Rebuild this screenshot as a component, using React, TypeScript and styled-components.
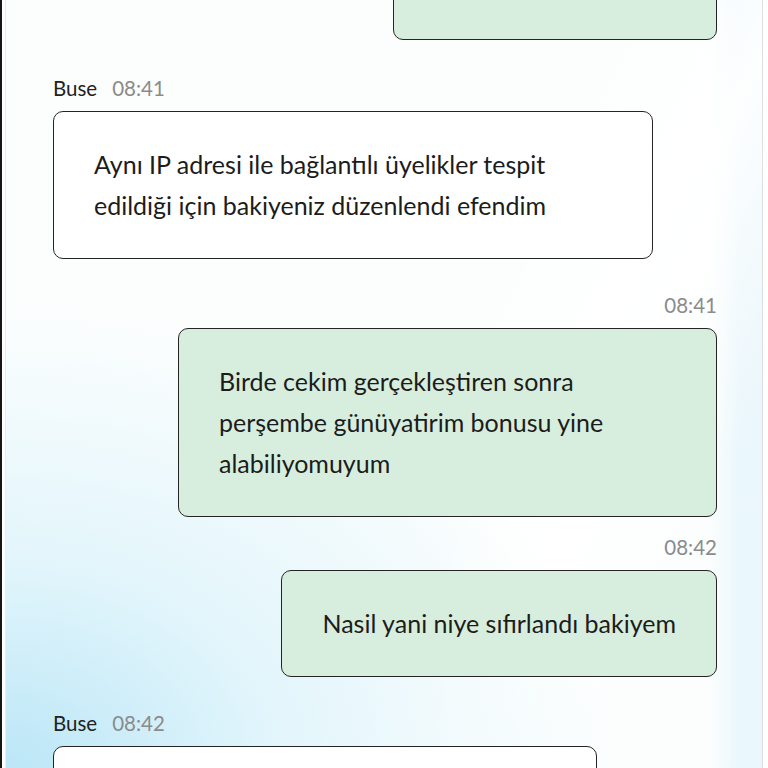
import React from "react";
import styled, { createGlobalStyle } from "styled-components";

const Global = createGlobalStyle`
  html, body { margin: 0; padding: 0; background: #ffffff; }
  body { font-family: "Lato", "Noto Sans", sans-serif; }
  * { box-sizing: border-box; }
`;

const Frame = styled.div`
  height: 768px;
  overflow: hidden;
  border-left: 2px solid #161616;
  padding-left: 3px;
  background: #ffffff;
`;

const Screen = styled.div`
  height: 768px;
  width: 758px;
  overflow: hidden;
  border-left: 1px solid #ececec;
  border-right: 1px solid #dedede;
  background:
    radial-gradient(ellipse 80% 60% at 0% 100%, rgba(176, 226, 246, 0.85) 0%, rgba(205, 238, 249, 0.55) 45%, rgba(255, 255, 255, 0) 100%),
    linear-gradient(115deg, rgba(255,255,255,0) 55%, rgba(255,255,255,0.9) 70%, rgba(255,255,255,0) 85%),
    linear-gradient(to right, rgba(255,255,255,0) 93%, rgba(232, 246, 251, 0.9) 97%),
    #fcfefe;
`;

const List = styled.div`
  display: flex;
  flex-direction: column;
  padding: 0 45px 0 47px;
  margin-top: -80px;
`;

const Group = styled.div<{ $out?: boolean; $gap: number }>`
  display: flex;
  flex-direction: column;
  align-items: ${(p) => (p.$out ? "flex-end" : "flex-start")};
  margin-top: ${(p) => p.$gap}px;
`;

const Meta = styled.div`
  display: flex;
  align-items: center;
  gap: 15px;
  height: 24px;
  font-size: 20.5px;
  line-height: 24px;
  margin-bottom: 11px;
`;

const Name = styled.span`
  color: #222222;
`;

const Time = styled.span`
  color: #8b8b8b;
`;

const Bubble = styled.div<{ $out?: boolean; $w?: number; $h?: number }>`
  width: ${(p) => (p.$w ? `${p.$w}px` : "fit-content")};
  ${(p) => (p.$h ? `height: ${p.$h}px;` : "")}
  padding: 32px 40px;
  border: 1.5px solid #242424;
  border-radius: 10px;
  background: ${(p) => (p.$out ? "#d7eede" : "#ffffff")};
  color: #1c1c1c;
  font-size: 25px;
  line-height: 41px;
  white-space: nowrap;
`;

export default function App() {
  return (
    <>
      <Global />
      <Frame>
        <Screen>
          <List>
            <Group $out $gap={0}>
              <Bubble $out $w={324} $h={120} />
            </Group>

            <Group $gap={36}>
              <Meta>
                <Name>Buse</Name>
                <Time>08:41</Time>
              </Meta>
              <Bubble $w={600}>
                Aynı IP adresi ile bağlantılı üyelikler tespit
                <br />
                edildiği için bakiyeniz düzenlendi efendim
              </Bubble>
            </Group>

            <Group $out $gap={34}>
              <Meta>
                <Time>08:41</Time>
              </Meta>
              <Bubble $out $w={539}>
                Birde cekim gerçekleştiren sonra
                <br />
                perşembe günüyatirim bonusu yine
                <br />
                alabiliyomuyum
              </Bubble>
            </Group>

            <Group $out $gap={18}>
              <Meta>
                <Time>08:42</Time>
              </Meta>
              <Bubble $out>Nasil yani niye sıfırlandı bakiyem</Bubble>
            </Group>

            <Group $gap={34}>
              <Meta>
                <Name>Buse</Name>
                <Time>08:42</Time>
              </Meta>
              <Bubble $w={544} $h={120} />
            </Group>
          </List>
        </Screen>
      </Frame>
    </>
  );
}
